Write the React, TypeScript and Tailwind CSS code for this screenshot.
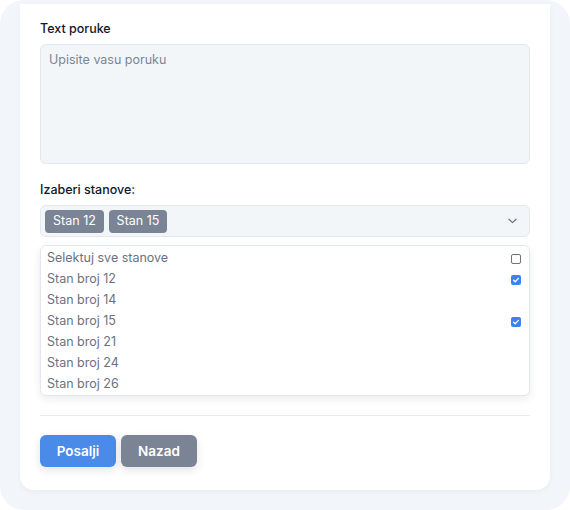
import React from "react";

const items = [
  { label: "Stan broj 12", checked: true },
  { label: "Stan broj 14", checked: false },
  { label: "Stan broj 15", checked: true },
  { label: "Stan broj 21", checked: false },
  { label: "Stan broj 24", checked: false },
  { label: "Stan broj 26", checked: false },
];

function CheckedBox() {
  return (
    <span className="flex h-[10px] w-[10px] items-center justify-center rounded-[2px] bg-[#3b82f6]">
      <svg width="8" height="8" viewBox="0 0 8 8" fill="none">
        <path d="M1.6 4.2 L3.2 5.7 L6.4 2.4" stroke="white" strokeWidth="1.3" strokeLinecap="round" strokeLinejoin="round" />
      </svg>
    </span>
  );
}

function EmptyBox() {
  return <span className="block h-[10px] w-[10px] rounded-[2px] border-[1.5px] border-[#6b7280] bg-white" />;
}

export default function App() {
  return (
    <div className="bg-white" style={{ fontFamily: "Inter, 'Noto Sans', sans-serif" }}>
      <div className="flex h-[510px] w-[570px] flex-col rounded-[24px] bg-[#f2f5f9] px-5 pt-1">
        <div className="flex flex-col rounded-b-[14px] bg-white px-5 pt-4 pb-[23px] shadow-[0_2px_6px_rgba(15,23,42,0.04)]">
          <label className="mb-1.5 text-[12.5px] leading-[18px] font-medium text-[#111827]">Text poruke</label>
          <div className="h-[120px] rounded-md border border-[#e3e8ee] bg-[#f3f6f9] px-2 py-[6px] text-[12.5px] leading-[18px] text-[#7c8593]">
            Upisite vasu poruku
          </div>

          <label className="mt-[17px] mb-1.5 text-[12.5px] leading-[18px] font-medium text-[#111827]">Izaberi stanove:</label>
          <div className="flex h-[32px] items-center justify-between rounded-md border border-[#e3e8ee] bg-[#f3f6f9] pr-3 pl-1">
            <div className="flex gap-[5px]">
              <span className="flex h-[23px] w-[59px] items-center justify-center rounded-[4px] bg-[#7b8494] text-[12.5px] text-white">Stan 12</span>
              <span className="flex h-[23px] w-[58px] items-center justify-center rounded-[4px] bg-[#7b8494] text-[12.5px] text-white">Stan 15</span>
            </div>
            <svg width="9" height="6" viewBox="0 0 9 6" fill="none">
              <path d="M1 1.2 L4.5 4.6 L8 1.2" stroke="#6b7280" strokeWidth="1.2" strokeLinecap="round" strokeLinejoin="round" />
            </svg>
          </div>

          <div className="mt-2 rounded-md border border-[#e3e8ee] bg-white pt-[2px] shadow-[0_3px_8px_rgba(15,23,42,0.08)]">
            <div className="flex h-[21px] items-center justify-between pr-2 pl-1.5 text-[12.5px] text-[#6b7280]">
              <span>Selektuj sve stanove</span>
              <EmptyBox />
            </div>
            {items.map((it) => (
              <div key={it.label} className="flex h-[21px] items-center justify-between pr-2 pl-1.5 text-[12.5px] text-[#6b7280]">
                <span>{it.label}</span>
                {it.checked ? <CheckedBox /> : null}
              </div>
            ))}
          </div>

          <div className="mt-[19px] h-px bg-[#e8ecf0]" />

          <div className="mt-[19px] flex gap-[5px]">
            <button className="h-[32px] w-[76px] rounded-md bg-[#4a8ae8] text-[13.5px] font-semibold text-white shadow-[0_3px_8px_rgba(15,23,42,0.12)]">
              Posalji
            </button>
            <button className="h-[32px] w-[76px] rounded-md bg-[#7b8494] text-[13.5px] font-semibold text-white shadow-[0_3px_8px_rgba(15,23,42,0.12)]">
              Nazad
            </button>
          </div>
        </div>
      </div>
    </div>
  );
}
